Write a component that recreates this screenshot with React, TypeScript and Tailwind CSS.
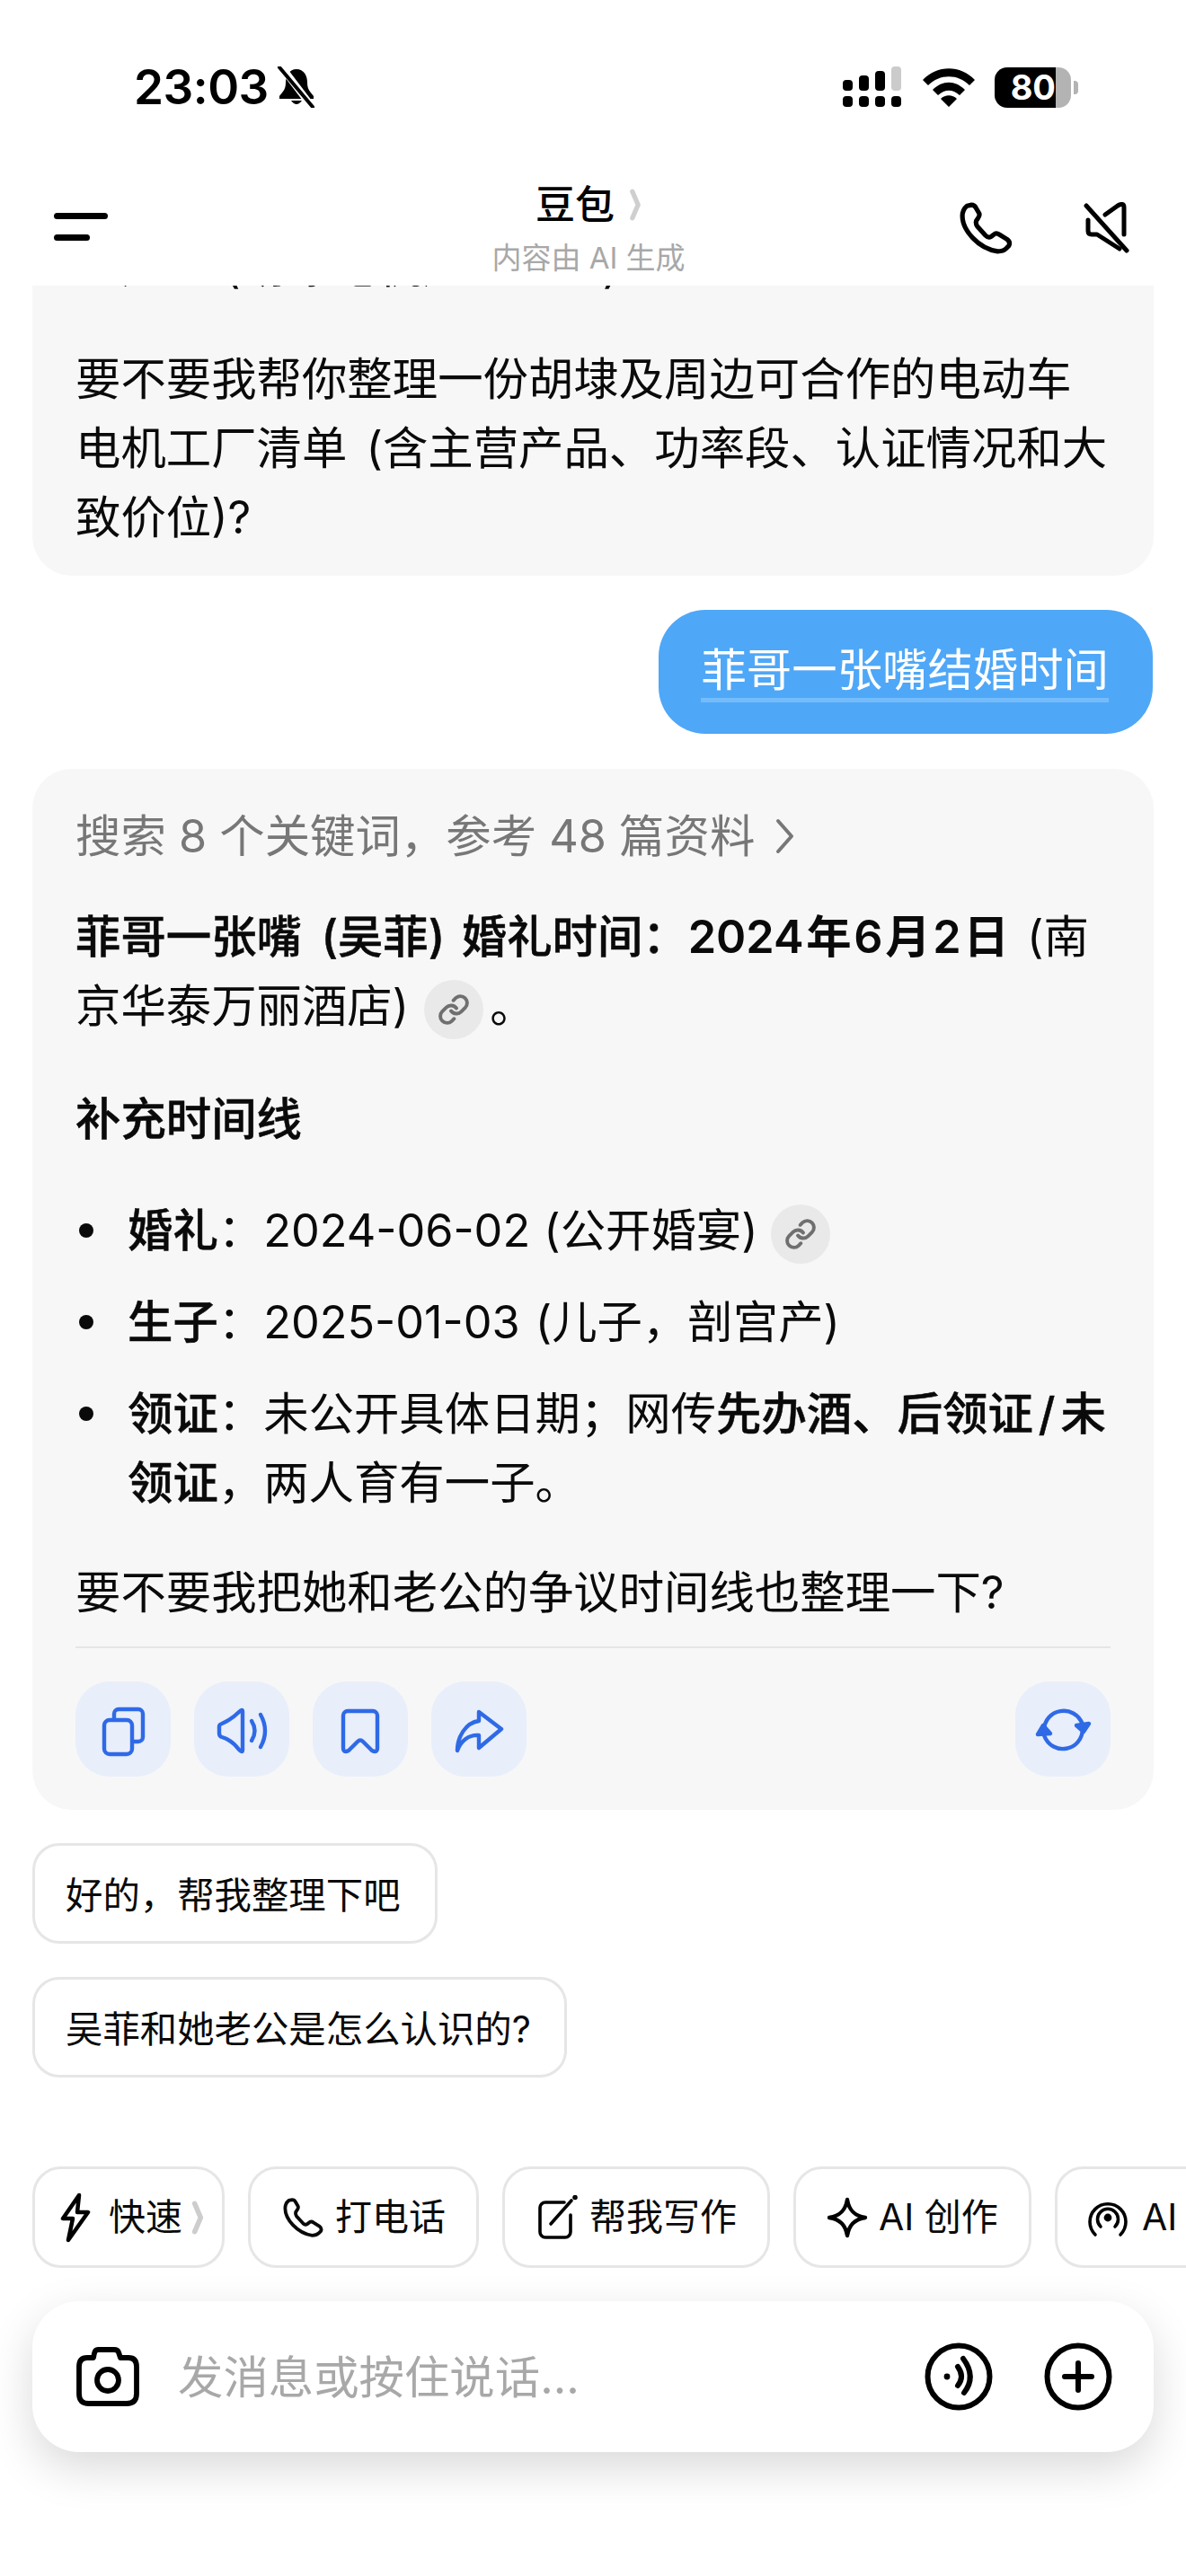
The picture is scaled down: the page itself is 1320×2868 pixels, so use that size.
import React from "react";
import { Link } from "lucide-react";

const Chain = () => (
  <span className="inline-flex h-[66px] w-[66px] items-center justify-center rounded-full bg-[#e9e9e9] align-middle">
    <Link size={36} strokeWidth={2.6} color="#6f6f6f" />
  </span>
);

const Chevron = ({ className, color }: { className: string; color: string }) => (
  <svg viewBox="0 0 12 34" className={className} fill="none" stroke={color} strokeWidth="5" strokeLinecap="round" strokeLinejoin="round">
    <path d="M3 3 L9 17 L3 31" />
  </svg>
);

const PhoneIcon = ({ className, sw = 5 }: { className: string; sw?: number }) => (
  <svg viewBox="0 0 58 56" className={className} fill="none" stroke="currentColor" strokeWidth={sw} strokeLinejoin="round">
    <path d="M8 4 L13 3 Q16 3 17.5 6 L21 12 Q22 14 20 17 L18 20 Q17 23 19 26 L28 36 Q31 39 34 37 L38 34 Q40 33 43 35 L51 40 Q55 43 53 47 L50 50 Q47 53 41 53 C20 50 3 30 3 15 Q3 8 8 4Z" />
  </svg>
);

const ActionIcon = ({ children }: { children: React.ReactNode }) => (
  <div className="h-[106px] w-[106px] shrink-0 rounded-[38px] bg-[#e8eefa]">
    <svg viewBox="0 0 106 106" className="h-full w-full" fill="none" stroke="#2f6ae6" strokeWidth="4.4" strokeLinecap="round" strokeLinejoin="round">
      {children}
    </svg>
  </div>
);

const ToolChip = ({ width, icon, label, gap = 16, trailing }: { width: string; icon: React.ReactNode; label: string; gap?: number; trailing?: React.ReactNode }) => (
  <div className={`flex h-[113px] shrink-0 items-center rounded-[32px] border-[3px] border-[#e6e6e6] bg-white text-[41px] leading-none text-[#0a0a0a] ${width}`}>
    {icon}
    <span className="whitespace-nowrap" style={{ marginLeft: gap }}>{label}</span>
    {trailing}
  </div>
);

export default function App() {
  return (
    <div className="flex h-[2868px] w-[1320px] flex-col overflow-hidden bg-white font-['Inter','Noto_Sans_CJK_SC',sans-serif] text-[50.4px] leading-[77px] text-[#0a0a0a]">
      {/* status bar */}
      <div className="flex h-[176px] shrink-0 items-start justify-between pl-[149px] pr-[120px] pt-[70px]">
        <div className="flex items-center">
          <span className="text-[53px] font-semibold leading-[54px] tracking-[-0.5px] text-black">23:03</span>
          <svg viewBox="0 0 44 46" className="ml-[9px] h-[46px] w-[44px]">
            <path d="M22 3 C14 3 10 10 10 18 C10 26 6 29 3 33 V36 H41 V33 C38 29 34 26 34 18 C34 10 30 3 22 3Z M16 38 Q22 46 28 38Z" fill="#000" />
            <path d="M5 0 L40 46" stroke="#fff" strokeWidth="8" />
            <path d="M3 1 L40 45" stroke="#000" strokeWidth="4" strokeLinecap="round" />
          </svg>
        </div>
        <div className="flex items-center pt-[4px]">
          <svg viewBox="0 0 66 46" className="h-[46px] w-[66px]">
            <g fill="#000">
              <rect x="0" y="15" width="11" height="12" rx="4" />
              <rect x="18" y="10" width="11" height="17" rx="4" />
              <rect x="36" y="5" width="11" height="22" rx="4" />
              <rect x="0" y="33" width="11" height="12" rx="4" />
              <rect x="18" y="33" width="11" height="12" rx="4" />
              <rect x="36" y="33" width="11" height="12" rx="4" />
              <rect x="54" y="33" width="11" height="12" rx="4" />
            </g>
            <rect x="54" y="0" width="11" height="27" rx="4" fill="#cbcbcb" />
          </svg>
          <svg viewBox="0 0 58 44" className="ml-[23px] h-[44px] w-[58px]">
            <path d="M0 14 C16 -3 42 -3 58 14 L52 20 C39 7 19 7 6 20Z M11 25 C22 14 36 14 47 25 L41 31 C33 24 25 24 17 31Z M20 35 C25 30 33 30 38 35 L29 44Z" fill="#000" />
          </svg>
          <div className="ml-[22px] flex items-center">
            <div className="flex h-[45px] w-[85px] overflow-hidden rounded-[14px]">
              <div className="flex w-[68px] items-center justify-end bg-black text-[38px] font-bold leading-none text-white">80</div>
              <div className="w-[17px] bg-[#b3b3b3]" />
            </div>
            <div className="ml-[3px] h-[15px] w-[5px] rounded-r-[4px] bg-[#b3b3b3]" />
          </div>
        </div>
      </div>

      {/* header */}
      <div className="flex h-[142px] shrink-0 items-start pl-[60px] pr-[56px]">
        <div className="flex w-[190px] flex-col gap-[17px] pt-[61px]">
          <div className="h-[7px] w-[60px] rounded-full bg-black" />
          <div className="h-[7px] w-[40px] rounded-full bg-black" />
        </div>
        <div className="flex flex-1 flex-col items-center pt-[24px]">
          <div className="flex h-[56px] items-center">
            <span className="text-[44px] font-medium leading-[56px] text-black">豆包</span>
            <Chevron className="ml-[16px] h-[36px] w-[14px]" color="#cfcfcf" />
          </div>
          <span className="mt-[10px] text-[33px] leading-[42px] text-[#a8a8a8]">内容由 AI 生成</span>
        </div>
        <div className="flex w-[204px] items-start justify-end pt-[49px] text-black">
          <PhoneIcon className="h-[58px] w-[60px]" />
          <svg viewBox="0 0 58 58" className="ml-[78px] h-[58px] w-[58px]" fill="none" stroke="#000" strokeWidth="5" strokeLinecap="round" strokeLinejoin="round">
            <path d="M3 4 L48 54" />
            <path d="M24 14 L38 4 Q45 0 45 6 V36" />
            <path d="M5 20 V32 Q5 36 9 36 H15 L40 52" />
          </svg>
        </div>
      </div>

      {/* messages */}
      <div className="flex min-h-0 flex-1 flex-col overflow-hidden">
        <div className="mx-[36px] -mt-[60px] rounded-[44px] bg-[#f7f7f7] px-[48px] pb-[27px]">
          <p className="whitespace-nowrap">：厂量 (胡埭电机厂区整理)</p>
          <p className="mt-[48px]">要不要我帮你整理一份胡埭及周边可合作的电动车<br />电机工厂清单 <span className="ml-[7px]">(含主营产品、功率段、认证情况和大</span><br />致价位)?</p>
        </div>

        <div className="mr-[37px] mt-[38px] self-end rounded-[52px] bg-[#4fa7f7] pb-[35px] pl-[47px] pr-[49px] pt-[36px] text-white">
          <span className="block border-b-[5px] border-[#74bcfb] leading-[62px]">菲哥一张嘴结婚时间</span>
        </div>

        <div className="mx-[36px] mt-[39px] rounded-[44px] bg-[#f7f7f7] px-[48px] pb-[37px] pt-[36px]">
          <div className="flex items-center text-[#777777]">
            <span>搜索 8 个关键词，参考 48 篇资料</span>
            <svg viewBox="0 0 22 40" className="ml-[22px] h-[40px] w-[22px]" fill="none" stroke="#777777" strokeWidth="4" strokeLinecap="round" strokeLinejoin="round">
              <path d="M4 3 L19 20 L4 37" />
            </svg>
          </div>
          <p className="mt-[35px] whitespace-nowrap">
            <b className="font-medium [-webkit-text-stroke:0.5px]">菲哥一张嘴 <span className="ml-[8px] mr-[5px]">(吴菲)</span> 婚礼时间：</b>
            <b className="font-semibold [word-spacing:-10px]">2024 年 6 月 2 日</b> <span className="ml-[6px]">(南</span><br />
            京华泰万丽酒店) <span className="ml-[3px]"><Chain /></span><span className="ml-[7px]">。</span>
          </p>
          <p className="mt-[49px] font-medium [-webkit-text-stroke:0.5px]">补充时间线</p>
          <ul className="mt-[47px] flex flex-col gap-[25px]">
            <li className="flex">
              <span className="ml-[4px] mt-[31px] h-[16px] w-[16px] shrink-0 rounded-full bg-[#0a0a0a]" />
              <span className="ml-[38px]"><b className="font-medium [-webkit-text-stroke:0.5px]">婚礼</b>：2024-06-02 <span className="ml-[1px]">(公开婚宴)</span> <Chain /></span>
            </li>
            <li className="flex">
              <span className="ml-[4px] mt-[31px] h-[16px] w-[16px] shrink-0 rounded-full bg-[#0a0a0a]" />
              <span className="ml-[38px]"><b className="font-medium [-webkit-text-stroke:0.5px]">生子</b>：2025-01-03 <span className="ml-[3px]">(儿子，剖宫产)</span></span>
            </li>
            <li className="flex">
              <span className="ml-[4px] mt-[31px] h-[16px] w-[16px] shrink-0 rounded-full bg-[#0a0a0a]" />
              <span className="ml-[38px] whitespace-nowrap"><b className="font-medium [-webkit-text-stroke:0.5px]">领证</b>：未公开具体日期；网传<b className="font-medium [-webkit-text-stroke:0.5px]">先办酒、后领证<span className="mx-[6px]">/</span>未<br />领证</b>，两人育有一子。</span>
            </li>
          </ul>
          <p className="mt-[45px]">要不要我把她和老公的争议时间线也整理一下?</p>
          <div className="mt-[22px] h-[2px] bg-[#e6e6e6]" />
          <div className="mt-[37px] flex items-center gap-[26px]">
            <ActionIcon>
              <rect x="32" y="43" width="31" height="38" rx="6" />
              <path d="M43 42 V36 a5 5 0 0 1 5-5 H70 a5 5 0 0 1 5 5 V62 a5 5 0 0 1 -5 5 H64" />
            </ActionIcon>
            <ActionIcon>
              <path d="M54 34 V76 Q54 80 50 76 C44 68 38 64 31 62 Q28 61 28 58 V50 Q28 48 31 47 C38 44 44 40 50 34 Q54 30 54 34Z" />
              <path d="M64 44 Q71 55 64 66" />
              <path d="M74 37 Q84 55 74 73" />
            </ActionIcon>
            <ActionIcon>
              <path d="M39 33 H67 a5 5 0 0 1 5 5 V74 q0 6 -6 3 L56 67 Q53 64 50 67 L40 77 q-6 3 -6 -3 V38 a5 5 0 0 1 5 -5Z" />
            </ActionIcon>
            <ActionIcon>
              <path d="M53 34 L78 53 L53 74 V60 C42 59 33 66 29 77 C29 62 38 46 53 44Z" />
            </ActionIcon>
            <div className="ml-auto">
              <ActionIcon>
                <path d="M32 55 C32 30 66 24 75 48" />
                <path d="M75 52 C75 78 41 84 32 60" />
                <path d="M68 49 L76 56 L82 47Z" fill="#2f6ae6" />
                <path d="M25 59 L31 49 L39 58Z" fill="#2f6ae6" />
              </ActionIcon>
            </div>
          </div>
        </div>

        <div className="ml-[36px] mt-[37px] w-fit rounded-[30px] border-[3px] border-[#e6e6e6] pl-[34px] pr-[38px] pt-[4px] text-[41.4px] leading-[102px]">好的，帮我整理下吧</div>
        <div className="ml-[36px] mt-[37px] w-fit rounded-[30px] border-[3px] border-[#e6e6e6] pl-[34px] pr-[37px] pt-[4px] text-[41.4px] leading-[102px]">吴菲和她老公是怎么认识的?</div>
      </div>

      {/* tool chips */}
      <div className="flex shrink-0 gap-[26px] overflow-hidden pl-[36px]">
        <ToolChip
          width="w-[214px] pl-[28px]"
          gap={20}
          label="快速"
          icon={
            <svg viewBox="0 0 34 56" className="h-[56px] w-[34px]" fill="none" stroke="#000" strokeWidth="4.5" strokeLinejoin="round">
              <path d="M21 3 L3 29 H14 L9 53 L31 22 H19 Z" />
            </svg>
          }
          trailing={<Chevron className="ml-[10px] h-[38px] w-[14px]" color="#cdcdcd" />}
        />
        <ToolChip
          width="w-[257px] pl-[36px]"
          gap={12}
          label="打电话"
          icon={<PhoneIcon className="h-[46px] w-[46px]" sw={4.8} />}
        />
        <ToolChip
          width="w-[298px] pl-[37px]"
          gap={13}
          label="帮我写作"
          icon={
            <svg viewBox="0 0 44 50" className="h-[50px] w-[44px]" fill="none" stroke="#000" strokeWidth="3.6" strokeLinecap="round" strokeLinejoin="round">
              <path d="M29 8 H8 a6 6 0 0 0 -6 6 V41 a6 6 0 0 0 6 6 H30 a6 6 0 0 0 6 -6 V22" />
              <path d="M14 32 L37 6" />
              <circle cx="41" cy="2.5" r="1" fill="#000" />
            </svg>
          }
        />
        <ToolChip
          width="w-[265px] pl-[34px]"
          gap={12}
          label="AI 创作"
          icon={
            <svg viewBox="0 0 46 46" className="h-[46px] w-[46px]" fill="none" stroke="#000" strokeWidth="4.4" strokeLinejoin="round">
              <path d="M23 3 C25 15 31 21 43 23 C31 25 25 31 23 43 C21 31 15 25 3 23 C15 21 21 15 23 3Z" />
            </svg>
          }
        />
        <ToolChip
          width="w-[300px] pl-[33px]"
          gap={15}
          label="AI 播客"
          icon={
            <svg viewBox="0 0 46 46" className="h-[46px] w-[46px]" fill="none" stroke="#000" strokeWidth="3.6" strokeLinecap="round">
              <path d="M9 42 A20 20 0 1 1 37 42" />
              <path d="M15 33 A11.5 11.5 0 1 1 31 33" />
              <circle cx="23" cy="23" r="4.4" fill="#000" stroke="none" />
            </svg>
          }
        />
      </div>

      {/* input */}
      <div className="mx-[36px] mb-[138px] mt-[37px] flex h-[168px] shrink-0 items-center rounded-[52px] bg-white pl-[49px] pr-[46px] shadow-[0_18px_50px_rgba(0,0,0,0.15)]">
        <svg viewBox="0 0 70 66" className="h-[66px] w-[70px]" fill="none" stroke="#000" strokeWidth="5.8" strokeLinejoin="round">
          <path d="M24 3 H42 Q46 3 47 6 L49 12 H58 Q67 12 67 22 V52 Q67 63 56 63 H14 Q3 63 3 52 V22 Q3 12 12 12 H19 L20 7 Q21 3 24 3Z" />
          <circle cx="35" cy="37" r="12" />
        </svg>
        <span className="ml-[43px] text-[#a8a8a8]">发消息或按住说话...</span>
        <div className="ml-auto flex items-center gap-[57px]">
          <svg viewBox="0 0 76 76" className="h-[76px] w-[76px]" fill="none" stroke="#000" strokeWidth="6" strokeLinecap="round">
            <circle cx="38" cy="38" r="34.5" />
            <circle cx="25" cy="38" r="3.4" fill="#000" stroke="none" />
            <path d="M37 27 Q45 38 37 48" />
            <path d="M43 18 Q58 38 44 56" />
          </svg>
          <svg viewBox="0 0 76 76" className="h-[76px] w-[76px]" fill="none" stroke="#000" strokeWidth="6" strokeLinecap="round">
            <circle cx="38" cy="38" r="34.5" />
            <path d="M38 23 V53 M23 38 H53" />
          </svg>
        </div>
      </div>
    </div>
  );
}
